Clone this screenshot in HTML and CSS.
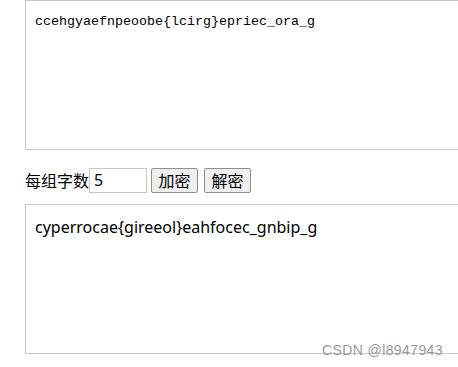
FILE: index.html
```html
<!DOCTYPE html>
<html>
<head>
<meta charset="utf-8">
<link rel="stylesheet" href="styles.css">
</head>
<body>
<div class="page">
  <textarea class="box box-in">ccehgyaefnpeoobe{lcirg}epriec_ora_g</textarea>
  <div class="row">
    <span class="label">每组字数</span><input class="num" type="text" value="5"><button class="btn">加密</button><button class="btn">解密</button>
  </div>
  <textarea class="box box-out">cyperrocae{gireeol}eahfocec_gnbip_g</textarea>
  <div class="mark">CSDN @l8947943</div>
</div>
</body>
</html>
```
FILE: styles.css
```css
html, body {
  margin: 0;
  padding: 0;
  background: #fff;
  overflow: hidden;
}
.page {
  position: relative;
  width: 458px;
  height: 367px;
  padding-left: 25px;
  box-sizing: border-box;
  overflow: hidden;
}
.box {
  display: block;
  width: 433px;
  height: 150px;
  margin: 0;
  border: 1px solid #c8c8c8;
  border-right-width: 0;
  box-sizing: border-box;
  resize: none;
  outline: none;
  color: #000;
  background: #fff;
  overflow: hidden;
}
.box-in {
  padding: 13px 9px;
  font-family: "Liberation Mono", monospace;
  font-size: 13.33px;
  line-height: 16px;
}
.box-out {
  padding: 11px 9px;
  font-family: "Noto Sans", "Open Sans", sans-serif;
  font-size: 16px;
  line-height: 22px;
}
.row {
  display: flex;
  align-items: center;
  height: 26px;
  margin: 17px 0 11px;
  font-family: "Noto Sans CJK SC", sans-serif;
  font-size: 16px;
  color: #000;
}
.label {
  line-height: 26px;
}
.num {
  width: 58px;
  height: 25px;
  box-sizing: border-box;
  border: 1px solid #c8c8c8;
  padding: 0 4px;
  margin: 0;
  font-family: "Noto Sans", sans-serif;
  font-size: 16px;
  outline: none;
}
.btn {
  width: 47px;
  height: 25px;
  box-sizing: border-box;
  margin: 0 0 0 4px;
  padding: 0;
  border: 1px solid #8f8f8f;
  border-radius: 2px;
  background: #efefef;
  font-family: "Noto Sans CJK SC", sans-serif;
  font-size: 16px;
  line-height: 22px;
  color: #000;
}
.btn + .btn {
  margin-left: 6px;
}
.mark {
  position: absolute;
  left: 322px;
  top: 342px;
  font-family: "Liberation Sans", sans-serif;
  font-size: 14px;
  color: #9a9a9a;
  letter-spacing: 0.4px;
}
```
